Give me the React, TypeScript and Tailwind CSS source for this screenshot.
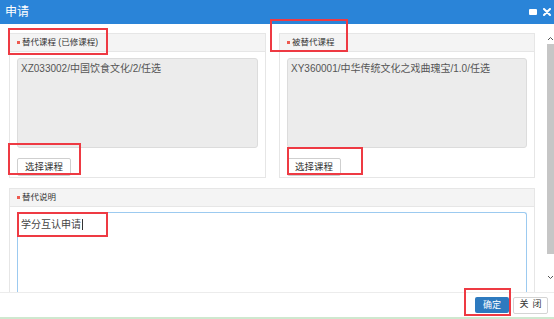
import React from 'react';

const FONT = '"Liberation Sans", "Noto Sans CJK SC", sans-serif';

function Star() {
  return <span className="mr-[2px] inline-block h-[3px] w-[3px] bg-[#ee5a50]" />;
}

interface CoursePanelProps {
  label: string;
  course: string;
  className?: string;
}

function CoursePanel({ label, course, className }: CoursePanelProps) {
  return (
    <div className={`flex h-[145px] flex-col border border-[#e6e6e6] bg-white ${className ?? ''}`}>
      <div className="flex h-[19px] items-center border-b border-[#e6e6e6] bg-[#f4f4f4] pl-[7px] text-[8.5px] text-[#333]">
        <Star />
        {label}
      </div>
      <div className="flex flex-1 flex-col px-[7px] pt-[6px]">
        <div className="h-[90px] rounded-[3px] border border-[#dcdcdc] bg-[#ececec] px-[3px] pt-[3px] text-[10px] leading-[14px] text-[#555]">
          {course}
        </div>
        <div className="mt-[5px]">
          <button className="h-[18px] rounded-[2px] border border-[#cfcfcf] bg-white px-[7px] text-[9.5px] leading-[16px] text-[#333]">
            选择课程
          </button>
        </div>
      </div>
    </div>
  );
}

function RedBox({ className }: { className: string }) {
  return <div className={`pointer-events-none absolute border-2 border-[#ee3a43] ${className}`} />;
}

export default function App() {
  return (
    <div className="relative flex h-[319px] w-[554px] flex-col overflow-hidden bg-white" style={{ fontFamily: FONT }}>
      {/* Title bar */}
      <div className="flex h-[24px] shrink-0 items-center justify-between bg-[#2a84d8] pl-[5px] pr-[3px]">
        <span className="text-[12px] text-white">申请</span>
        <div className="flex items-center gap-[6px]">
          <span className="h-[6px] w-[8px] rounded-[1px] bg-white" />
          <svg width="8" height="8" viewBox="0 0 8 8">
            <path d="M1 1L7 7M7 1L1 7" stroke="white" strokeWidth="2" strokeLinecap="round" />
          </svg>
        </div>
      </div>

      {/* Body */}
      <div className="flex min-h-0 flex-1">
        <div className="flex min-w-0 flex-1 flex-col overflow-hidden pl-[9px] pr-[12px] pt-[9px]">
          <div className="flex gap-[13px]">
            <CoursePanel className="w-[257px]" label="替代课程 (已修课程)" course="XZ033002/中国饮食文化/2/任选" />
            <CoursePanel className="flex-1" label="被替代课程" course="XY360001/中华传统文化之戏曲瑰宝/1.0/任选" />
          </div>

          <div className="mt-[10px] flex flex-1 flex-col border border-b-0 border-[#e6e6e6]">
            <div className="flex h-[18px] shrink-0 items-center border-b border-[#e6e6e6] bg-[#f4f4f4] pl-[7px] text-[8.5px] text-[#333]">
              <Star />
              替代说明
            </div>
            <div className="flex-1 px-[7px] pt-[5px]">
              <div className="h-full rounded-t-[3px] border border-b-0 border-[#9ccaf0] px-[3px] pt-[4px] text-[10px] leading-[14px] text-[#444]">
                学分互认申请
                <span className="ml-[1px] inline-block h-[11px] w-px translate-y-[2px] bg-[#333]" />
              </div>
            </div>
          </div>
        </div>

        {/* Scrollbar */}
        <div className="flex w-[7px] shrink-0 flex-col items-center pt-[12px] pb-[12px]">
          <svg width="7" height="5" viewBox="0 0 7 5">
            <path d="M1 4L3.5 1.5L6 4" stroke="#555" strokeWidth="1" fill="none" />
          </svg>
          <div className="mt-[3px] h-[210px] w-full bg-[#c6c6c6]" />
          <div className="flex-1" />
          <svg width="7" height="5" viewBox="0 0 7 5">
            <path d="M1 1L3.5 3.5L6 1" stroke="#555" strokeWidth="1" fill="none" />
          </svg>
        </div>
      </div>

      {/* Footer */}
      <div className="flex h-[25px] shrink-0 items-center justify-end gap-[4px] border-t border-[#ececec] bg-white pr-[6px]">
        <button className="h-[16px] w-[34px] rounded-[2px] bg-[#2d7abf] text-[9px] leading-[16px] text-white">确定</button>
        <button className="flex h-[17px] w-[35px] items-center justify-center gap-[4px] rounded-[2px] border border-[#d4d4d4] bg-white text-[9px] text-[#333]">
          <span>关</span>
          <span>闭</span>
        </button>
      </div>
      <div className="h-[2px] shrink-0 bg-[#cfe8cf]" />

      {/* Annotation boxes */}
      <RedBox className="left-[8px] top-[28px] h-[27px] w-[100px]" />
      <RedBox className="left-[270px] top-[19px] h-[33px] w-[78px]" />
      <RedBox className="left-[8px] top-[143px] h-[32px] w-[73px]" />
      <RedBox className="left-[287px] top-[147px] h-[28px] w-[76px]" />
      <RedBox className="left-[17px] top-[212px] h-[25px] w-[91px]" />
      <RedBox className="left-[464px] top-[288px] h-[28px] w-[47px]" />
    </div>
  );
}
